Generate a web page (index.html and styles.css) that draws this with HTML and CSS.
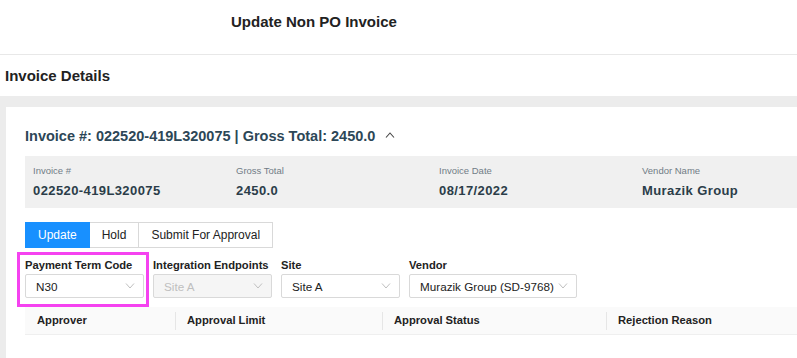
FILE: index.html
```html
<!DOCTYPE html>
<html lang="en">
<head>
    <meta charset="UTF-8">
    <meta name="viewport" content="width=device-width, initial-scale=1.0">
    <title>Update Non PO Invoice</title>
    <link rel="stylesheet" href="styles.css">
</head>
<body>
    <div class="page-header">
        <h1>Update Non PO Invoice</h1>
    </div>
    <h2 class="section-title">Invoice Details</h2>

    <div class="content">
        <div class="invoice-card">
            <div class="collapse-header">
                <span>Invoice #: 022520-419L320075 | Gross Total: 2450.0</span>
                <svg class="caret" width="10" height="6" viewBox="0 0 10 6">
                    <polyline points="1,5.5 5,1 9,5.5" fill="none" stroke="#444" stroke-width="1.1"/>
                </svg>
            </div>

            <div class="info-grid">
                <div class="info-item">
                    <p class="info-label">Invoice #</p>
                    <p class="info-value">022520-419L320075</p>
                </div>
                <div class="info-item">
                    <p class="info-label">Gross Total</p>
                    <p class="info-value">2450.0</p>
                </div>
                <div class="info-item">
                    <p class="info-label">Invoice Date</p>
                    <p class="info-value">08/17/2022</p>
                </div>
                <div class="info-item">
                    <p class="info-label">Vendor Name</p>
                    <p class="info-value">Murazik Group</p>
                </div>
            </div>

            <div class="btn-group">
                <button class="btn btn-primary">Update</button>
                <button class="btn">Hold</button>
                <button class="btn">Submit For Approval</button>
            </div>

            <div class="fields">
                <div class="field highlighted">
                    <label>Payment Term Code</label>
                    <div class="select">
                        <span>N30</span>
                        <svg width="10" height="6" viewBox="0 0 10 6"><polyline points="1,0.5 5,5 9,0.5" fill="none" stroke="#bfbfbf" stroke-width="1"/></svg>
                    </div>
                </div>
                <div class="field">
                    <label>Integration Endpoints</label>
                    <div class="select disabled">
                        <span>Site A</span>
                        <svg width="10" height="6" viewBox="0 0 10 6"><polyline points="1,0.5 5,5 9,0.5" fill="none" stroke="#bfbfbf" stroke-width="1"/></svg>
                    </div>
                </div>
                <div class="field">
                    <label>Site</label>
                    <div class="select">
                        <span>Site A</span>
                        <svg width="10" height="6" viewBox="0 0 10 6"><polyline points="1,0.5 5,5 9,0.5" fill="none" stroke="#bfbfbf" stroke-width="1"/></svg>
                    </div>
                </div>
                <div class="field field-wide">
                    <label>Vendor</label>
                    <div class="select">
                        <span>Murazik Group (SD-9768)</span>
                        <svg width="10" height="6" viewBox="0 0 10 6"><polyline points="1,0.5 5,5 9,0.5" fill="none" stroke="#bfbfbf" stroke-width="1"/></svg>
                    </div>
                </div>
            </div>

            <div class="table-head">
                <div class="th">Approver</div>
                <div class="th">Approval Limit</div>
                <div class="th">Approval Status</div>
                <div class="th">Rejection Reason</div>
            </div>
        </div>
    </div>
</body>
</html>
```

FILE: styles.css
```css
body {
    font-family: "Liberation Sans", Arial, sans-serif;
    margin: 0;
    background-color: #ffffff;
    color: #222;
    overflow: hidden;
}
.page-header {
    height: 42px;
    padding: 12px 0 0 231px;
    border-bottom: 1px solid #e8e8e8;
}
.page-header h1 {
    margin: 0;
    font-size: 15px;
    line-height: 20px;
    font-weight: bold;
    color: #222;
}
.section-title {
    margin: 0;
    height: 41px;
    padding-left: 5px;
    font-size: 15px;
    line-height: 41px;
    font-weight: bold;
    color: #222;
}
.content {
    background: #ececec;
    padding: 11px 0 0 6px;
    overflow: hidden;
}
.invoice-card {
    background: #ffffff;
    padding: 19px 0 23px 19px;
    overflow: hidden;
}
.collapse-header {
    display: flex;
    align-items: center;
    gap: 10px;
    font-size: 14.5px;
    line-height: 20px;
    font-weight: bold;
    color: #2d4757;
}
.collapse-header .caret {
    margin-top: -2px;
}
.info-grid {
    display: grid;
    grid-template-columns: repeat(4, 203px);
    margin-top: 10px;
    padding: 9px 0;
    background: #f0f0f0;
}
.info-item {
    padding-left: 8px;
}
.info-item p {
    margin: 0;
}
.info-label {
    font-size: 9.5px;
    line-height: 12px;
    color: #707c86;
}
.info-value {
    margin-top: 6px !important;
    font-size: 13px;
    line-height: 16px;
    font-weight: bold;
    letter-spacing: 0.4px;
    color: #2b3d49;
}
.btn-group {
    display: flex;
    margin-top: 14px;
}
.btn {
    height: 26px;
    padding: 0 12px;
    font-family: inherit;
    font-size: 12px;
    color: #222;
    background: #ffffff;
    border: 1px solid #d9d9d9;
    border-left-width: 0;
    cursor: pointer;
}
.btn:first-child {
    border-left-width: 1px;
}
.btn-primary {
    background: #1890ff;
    border-color: #1890ff;
    color: #ffffff;
}
.fields {
    display: flex;
    gap: 9px;
    margin-top: 10px;
}
.field {
    position: relative;
    width: 119px;
}
.field-wide {
    width: 168px;
}
.field label {
    display: block;
    font-size: 11.2px;
    line-height: 14px;
    font-weight: bold;
    color: #222;
    white-space: nowrap;
}
.highlighted::after {
    content: "";
    position: absolute;
    top: -6px;
    left: -8px;
    right: -5px;
    bottom: -9px;
    border: 3px solid #f542f0;
}
.select {
    display: flex;
    align-items: center;
    justify-content: space-between;
    box-sizing: border-box;
    height: 24px;
    margin-top: 2px;
    padding: 0 8px 0 10px;
    font-size: 11.7px;
    color: #222;
    background: #ffffff;
    border: 1px solid #d9d9d9;
    border-radius: 2px;
}
.select.disabled {
    background: #f5f5f5;
    color: #bfbfbf;
}
.table-head {
    display: grid;
    grid-template-columns: 150px 207px 224px 1fr;
    margin-top: 9px;
    height: 27px;
    background: #fafafa;
    border-bottom: 1px solid #efefef;
}
.th {
    position: relative;
    padding-left: 12px;
    font-size: 11.2px;
    line-height: 27px;
    font-weight: bold;
    color: #222;
}
.th + .th::before {
    content: "";
    position: absolute;
    left: 0;
    top: 5px;
    height: 18px;
    width: 1px;
    background: #e6e6e6;
}
```
